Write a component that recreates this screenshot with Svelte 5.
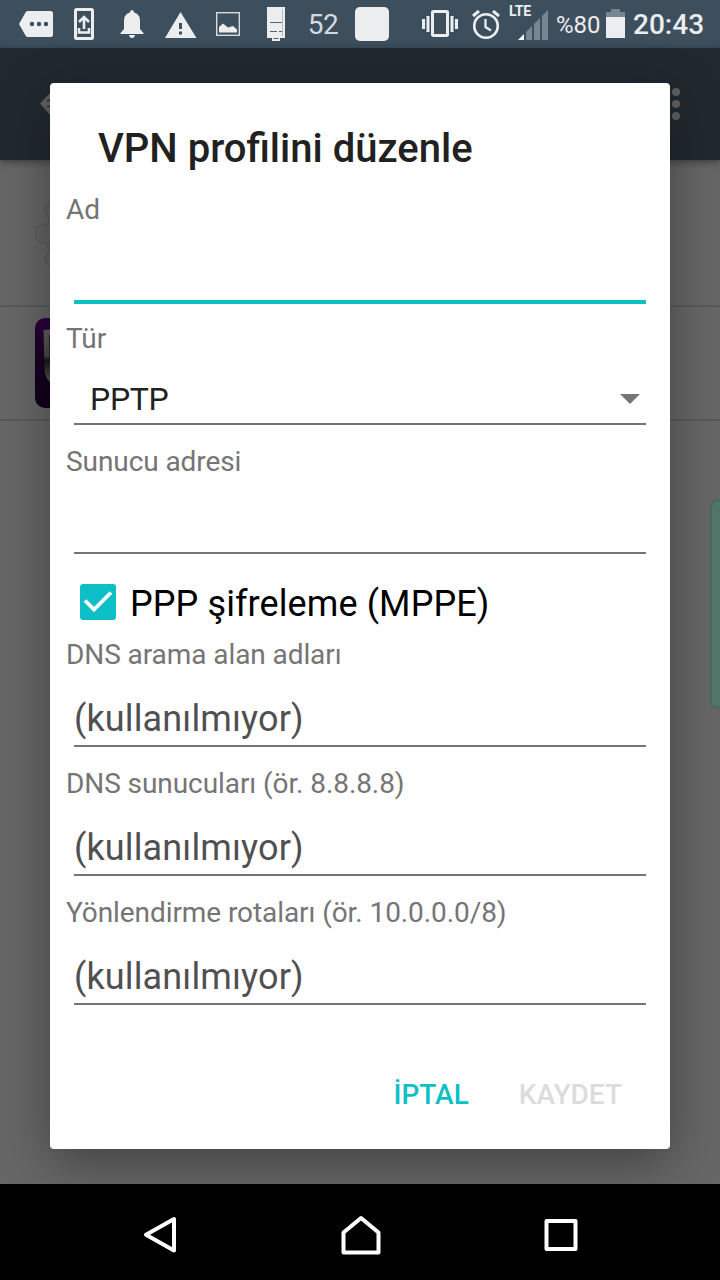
<script>
	let name = '';
	let server = '';
	let mppe = true;
	let signalBars = [
		'M9 32V24L15 18V32Z',
		'M17 32V16L23 10V32Z',
		'M25 32V8L31 2V32Z'
	];

	let advanced = [
		{ label: 'DNS arama alan adları', value: '' },
		{ label: 'DNS sunucuları (ör. 8.8.8.8)', value: '' },
		{ label: 'Yönlendirme rotaları (ör. 10.0.0.0/8)', value: '' }
	];
</script>

<div class="screen">
	<header class="status-bar">
		<div class="notifications">
			<span class="slot">
				<svg width="34" height="26" viewBox="0 0 34 26">
					<path d="M8.500 0H31.500Q34 0 34 2.500V23.500Q34 26 31.500 26H9Q7.500 26 6.500 24.500L0 13L6.500 1.500Q7.300 0 8.500 0Z" fill="#ebedef" />
					<g fill="#3d4f5d"><circle cx="13" cy="13" r="2.200" /><circle cx="20" cy="13" r="2.200" /><circle cx="27" cy="13" r="2.200" /></g>
				</svg>
			</span>
			<span class="slot">
				<svg width="20" height="32" viewBox="0 0 20 32" fill="none" stroke="#ebedef">
					<rect x="1.500" y="1.500" width="17" height="29" rx="1" stroke-width="3" />
					<path d="M5 20V24.500H15V20M10 21V9M5 14L10 9L15 14" stroke-width="2.600" />
				</svg>
			</span>
			<span class="slot">
				<svg width="24" height="28" viewBox="0 0 24 28" fill="#ebedef">
					<path d="M10 2.500Q10 0 12 0T14 2.500C18 3.500 20 6.500 20 11V19L23.500 23V24H0.500V23L4 19V11C4 6.500 6 3.500 10 2.500ZM9 25H15Q14.500 28 12 28T9 25Z" />
				</svg>
			</span>
			<span class="slot">
				<svg class="warning" width="32" height="26" viewBox="0 0 32 26">
					<path d="M15.500 0L31.500 26H0Z" fill="#ebedef" />
					<path d="M14 11H17V17H14ZM14 19.500H17V22.500H14Z" fill="#3d4f5d" />
				</svg>
			</span>
			<span class="slot">
				<svg width="24" height="24" viewBox="0 0 24 24">
					<rect x="0.700" y="0.700" width="22.600" height="22.600" fill="none" stroke="#d5dade" stroke-width="1.400" />
					<path d="M3 20.500V15L7 11.500L12 15.500L17 14L21 17.500V20.500Z" fill="#ebedef" />
				</svg>
			</span>
			<span class="slot">
				<svg width="18" height="34" viewBox="0 0 18 34">
					<path d="M0 0H18V31H13V34H5V31H0Z" fill="#ebedef" />
					<path d="M3 15.500H15M3 24.500H10M12 24.500H15M6.500 31.500H11.500" stroke="#526573" />
					<path d="M15.500 2V29" stroke="#b3bdc5" />
				</svg>
			</span>
			<span class="slot temperature">52</span>
			<span class="slot"><i class="tile"></i></span>
		</div>

		<div class="system">
			<svg class="vibrate" width="36" height="28" viewBox="0 0 36 28" fill="#ebedef">
				<path d="M0 9H3V19H0ZM4.500 6H7.500V22H4.500ZM28.500 6H31.500V22H28.500ZM33 9H36V19H33Z" />
				<rect x="10.500" y="1.500" width="15" height="24" rx="1" fill="none" stroke="#ebedef" stroke-width="3" />
			</svg>
			<svg class="alarm" width="28" height="29" viewBox="0 0 28 29" fill="none" stroke="#ebedef">
				<circle cx="14" cy="16" r="11.800" stroke-width="2.600" />
				<path d="M1 6L7 1M21 1L27 6" stroke-width="3" />
				<path d="M13.500 9V17L19 20.500" stroke-width="2.300" />
			</svg>
			<div class="signal">
				<span>LTE</span>
				<svg width="31" height="32" viewBox="0 0 31 32">
					<path d="M7 32H1L7 26Z" fill="#fff" />
					{#each signalBars as bar}
						<path d={bar} fill="#768590" />
					{/each}
				</svg>
			</div>
			<span class="percent">%80</span>
			<svg class="battery" width="19" height="29" viewBox="0 0 19 29">
				<path d="M5 0H14V3H19V8H0V3H5Z" fill="#768590" />
				<path d="M0 8H19V29H0Z" fill="#ebedef" />
			</svg>
			<span class="clock">20:43</span>
		</div>
	</header>

	<main>
		<div class="toolbar">
			<svg class="back" width="20" height="24" viewBox="0 0 20 24">
				<path d="M0 11.500L11 0V24Z" fill="#616161" />
				<path d="M7 8.500H11M7 14.500H11" stroke="#212930" stroke-width="1.500" />
			</svg>
			<div class="overflow"><i></i><i></i><i></i></div>
		</div>
		<div class="row first">
			<svg width="60" height="84" viewBox="0 0 60 84" fill="#636363" stroke="#565656">
				<path d="M20 4L10 16Q9 18 11 21Q14 25 13.500 30Q12 32 10 33L2 36Q0 37 0 41V46Q1 49 4 50L11 53Q13 55 14 59Q13 62 10 67Q9 70 11 72L20 80H60V4Z" />
			</svg>
		</div>
		<div class="row second">
			<svg width="60" height="90" viewBox="0 0 60 90">
				<defs>
					<linearGradient id="app-bg" x2="0" y2="1">
						<stop stop-color="#2b003a" />
						<stop offset="0.550" stop-color="#160021" />
						<stop offset="1" stop-color="#12001a" />
					</linearGradient>
					<linearGradient id="shield" x2="0" y2="1">
						<stop stop-color="#616161" />
						<stop offset="0.440" stop-color="#484848" />
						<stop offset="0.500" stop-color="#181818" />
						<stop offset="0.850" stop-color="#5d5d59" />
					</linearGradient>
				</defs>
				<rect width="60" height="90" rx="10" fill="url(#app-bg)" />
				<path d="M8.500 12L40 9V75L15 64Q9 58 9.500 50Z" fill="url(#shield)" />
				<path d="M14 17H30V40H14Z" fill="#282828" />
			</svg>
		</div>

		<!-- edge panel handle -->
		<div class="handle"></div>
	</main>

	<form class="dialog">
		<h1>VPN profilini düzenle</h1>

		<label class="field focused">
			<span>Ad</span>
			<input bind:value={name} />
		</label>

		<div class="field type">
			<span>Tür</span>
			<div class="spinner">
				PPTP
				<svg width="20" height="10" viewBox="0 0 20 10"><path d="M0 0H20L10 10Z" fill="#757575" /></svg>
			</div>
		</div>

		<label class="field">
			<span>Sunucu adresi</span>
			<input bind:value={server} />
		</label>

		<label class="checkbox">
			<input type="checkbox" bind:checked={mppe} />
			<svg width="36" height="36" viewBox="0 0 36 36">
				<rect width="36" height="36" rx="3" fill={mppe ? '#0fbfc7' : '#757575'} />
				<path d="M5 16.500L14 25.500L31 8.500" fill="none" stroke="#fff" stroke-width="3.800" />
			</svg>
			PPP şifreleme (MPPE)
		</label>

		{#each advanced as item}
			<label class="field">
				<span>{item.label}</span>
				<input placeholder="(kullanılmıyor)" bind:value={item.value} />
			</label>
		{/each}

		<div class="actions">
			<button type="button">İPTAL</button>
			<button type="button" disabled>KAYDET</button>
		</div>
	</form>

	<nav>
		<svg width="34" height="38" viewBox="0 0 34 38"><path d="M31 3V34.500L3 18.700Z" /></svg>
		<svg class="home" width="40" height="40" viewBox="0 0 40 40"><path d="M20 3L37.500 17.500V37.500H2.500V17.500Z" /></svg>
		<svg width="34" height="34" viewBox="0 0 34 34"><path d="M2.500 3H31.500V31H2.500Z" /></svg>
	</nav>
</div>

<style>
	:global(body) {
		background: #000;
	}

	.screen {
		position: relative;
		display: flex;
		flex-direction: column;
		width: 720px;
		height: 1280px;
		overflow: hidden;
		font-family: Roboto, sans-serif;
	}

	svg {
		display: block;
		flex: none;
	}

	.status-bar {
		display: flex;
		justify-content: space-between;
		align-items: center;
		box-sizing: border-box;
		height: 48px;
		padding: 0 16px 0 12px;
		background: #3d4f5d;
		color: #ebedef;
	}

	.notifications,
	.system {
		display: flex;
		align-items: center;
		height: 48px;
	}

	.slot {
		display: flex;
		align-items: center;
		justify-content: center;
		width: 48px;
	}

	.warning {
		margin: 2px 0 0 1px;
	}

	.temperature {
		box-sizing: border-box;
		padding-right: 2px;
		font-size: 28px;
		letter-spacing: -0.5px;
		color: #d5dade;
	}

	.tile {
		width: 34px;
		height: 34px;
		border-radius: 5px;
		background: #ebedef;
	}

	.alarm {
		margin-left: 14px;
	}

	.signal {
		display: flex;
		flex-direction: column;
		align-items: flex-end;
		width: 39px;
		height: 48px;
		margin-left: 9px;
	}

	.signal span {
		width: 39px;
		height: 8px;
		padding-top: 0;
		font-size: 14px;
		font-weight: 700;
		line-height: 23px;
		letter-spacing: -0.2px;
	}

	.percent {
		margin-left: 8px;
		width: 44px;
		padding-top: 2px;
		font-size: 24px;
		white-space: nowrap;
	}

	.battery {
		margin: -1px 0 0 6px;
	}

	.clock {
		margin-left: 8px;
		width: 71px;
		padding-top: 2px;
		font-size: 28px;
		font-weight: 500;
		line-height: 48px;
	}

	main {
		position: relative;
		height: 1136px;
		background: #666;
	}

	.toolbar {
		position: relative;
		display: flex;
		justify-content: space-between;
		align-items: center;
		box-sizing: border-box;
		height: 112px;
		padding: 0 40px;
		background: #212930;
		box-shadow: 0 2px 8px rgba(0, 0, 0, 0.4);
	}

	.overflow {
		display: flex;
		flex-direction: column;
		gap: 4px;
	}

	.overflow i {
		width: 8px;
		height: 8px;
		border-radius: 50%;
		background: #616161;
	}

	.row {
		display: flex;
		align-items: center;
		box-sizing: border-box;
		padding-left: 35px;
		border-bottom: 2px solid #595959;
	}

	.first {
		height: 147px;
	}

	.second {
		height: 114px;
	}

	.handle {
		position: absolute;
		top: 451px;
		right: -10px;
		box-sizing: border-box;
		width: 20px;
		height: 210px;
		border: 2px solid #4d6a5e;
		border-radius: 8px;
		background: #527769;
	}

	.dialog {
		position: absolute;
		top: 83px;
		left: 50px;
		box-sizing: border-box;
		width: 620px;
		height: 1066px;
		padding: 36px 16px 0;
		border-radius: 4px;
		background: #fff;
		box-shadow: 0 12px 48px rgba(0, 0, 0, 0.36);
	}

	h1 {
		margin: 0 32px 12px;
		font-size: 40px;
		font-weight: 500;
		line-height: 60px;
		color: #212121;
	}

	.field {
		display: block;
		height: 129px;
	}

	.field span {
		display: block;
		font-size: 28px;
		line-height: 38px;
		letter-spacing: -0.08px;
		color: #757575;
	}

	.field input {
		display: block;
		box-sizing: border-box;
		width: 572px;
		height: 73px;
		margin: 0 8px;
		padding: 19px 0 0;
		border: 0;
		border-bottom: 2px solid #757575;
		border-radius: 0;
		outline: 0;
		background: none;
		font: 36px Roboto, sans-serif;
		letter-spacing: 0.14px;
		color: #212121;
	}

	.field input::placeholder {
		color: #505050;
		opacity: 1;
	}

	.focused input {
		height: 75px;
		border-bottom: 4px solid #0fbfc7;
	}

	.type {
		height: 123px;
	}

	.spinner {
		display: flex;
		align-items: center;
		justify-content: space-between;
		box-sizing: border-box;
		width: 572px;
		height: 67px;
		margin: 0 8px;
		padding: 17px 6px 0 16px;
		border-bottom: 2px solid #757575;
		font-size: 32px;
		letter-spacing: -0.3px;
		color: #212121;
	}

	.checkbox {
		display: flex;
		align-items: center;
		gap: 14px;
		height: 64px;
		padding-left: 14px;
		font-size: 36px;
		letter-spacing: 0.1px;
		color: #000;
	}

	.checkbox input {
		display: none;
	}

	.checkbox svg {
		margin-top: -4px;
	}

	.actions {
		display: flex;
		justify-content: flex-end;
		gap: 50px;
		padding: 48px 32px 0 0;
	}

	button {
		padding: 0;
		border: 0;
		background: none;
		font: 500 28px/48px Roboto, sans-serif;
		color: #0fbfc7;
	}

	button:disabled {
		color: #dcdcdc;
	}

	nav {
		display: flex;
		align-items: center;
		justify-content: space-between;
		box-sizing: border-box;
		height: 96px;
		padding: 6px 142px 0 143px;
		background: #000;
	}

	nav path {
		fill: none;
		stroke: #fff;
		stroke-width: 4;
		stroke-linejoin: round;
	}
</style>
